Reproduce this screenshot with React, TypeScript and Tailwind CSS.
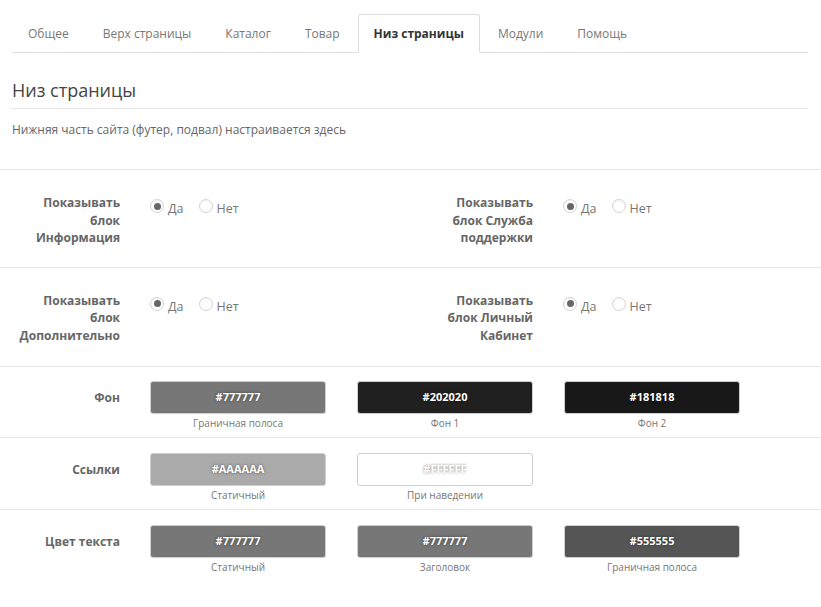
import React from "react";

const tabs = ["Общее", "Верх страницы", "Каталог", "Товар", "Низ страницы", "Модули", "Помощь"];

function Radio({ checked, label }: { checked?: boolean; label: string }) {
  return (
    <div className="flex items-start">
      <span className="flex h-[14px] w-[14px] items-center justify-center rounded-full border border-[#d4d4d4] bg-white shadow-[inset_0_1px_2px_rgba(0,0,0,0.06)]">
        {checked && <span className="h-[7px] w-[7px] rounded-full bg-[#666]" />}
      </span>
      <span className="ml-[4px] pt-[1px] text-[12.5px] leading-[18px] text-[#777]">{label}</span>
    </div>
  );
}

function RadioField({ label }: { label: string }) {
  return (
    <div className="flex w-[413px] shrink-0">
      <div className="ml-[14px] w-[106px] text-right text-[12px] font-bold leading-[17.5px] text-[#666]">{label}</div>
      <div className="ml-[30px] mt-[5px] flex gap-[15px]">
        <Radio checked label="Да" />
        <Radio label="Нет" />
      </div>
    </div>
  );
}

type Sw = { color: string; text: string; caption: string };

function Swatch({ s }: { s: Sw }) {
  return (
    <div className="flex w-[176px] flex-col items-center">
      <div
        className="flex h-[33px] w-full items-center justify-center rounded-[3px] border border-[#cfcfcf] text-[11px] font-bold text-white [text-shadow:0_0_3px_rgba(0,0,0,0.55)]"
        style={{ backgroundColor: s.color }}
      >
        {s.text}
      </div>
      <div className="mt-[2px] text-[10px] leading-[14px] text-[#777]">{s.caption}</div>
    </div>
  );
}

function SwatchRow({ label, items, pt }: { label: string; items: Sw[]; pt: string }) {
  return (
    <div className={`flex border-t border-[#e6e6e6] pb-[7px] ${pt}`}>
      <div className="ml-[14px] flex h-[33px] w-[106px] items-center justify-end text-[12px] font-bold text-[#666]">{label}</div>
      <div className="ml-[30px] flex gap-[31px]">
        {items.map((s, i) => (
          <Swatch key={i} s={s} />
        ))}
      </div>
    </div>
  );
}

export default function App() {
  return (
    <div className="h-[607px] w-[821px] overflow-hidden bg-white font-['Open_Sans',sans-serif]">
      <div className="pl-3 pr-[13px] pt-[14px]">
        <ul className="flex border-b border-[#dddddd]">
          {tabs.map((t) => {
            const active = t === "Низ страницы";
            return (
              <li
                key={t}
                className={
                  active
                    ? "-mb-px mr-[2px] rounded-t-[3px] border border-[#dddddd] border-b-white bg-white px-[15px] pb-[7px] pt-[9px] text-[12px] font-bold leading-5 text-[#333]"
                    : "mr-[2px] border border-transparent px-[15px] pb-[7px] pt-[9px] text-[12px] leading-5 text-[#777]"
                }
              >
                {t}
              </li>
            );
          })}
        </ul>
        <h1 className="mt-[24px] border-b border-[#e6e6e6] pb-[5px] text-[18px] leading-[26px] text-[#444]">Низ страницы</h1>
        <p className="mt-[12px] text-[12px] leading-[17px] text-[#666]">Нижняя часть сайта (футер, подвал) настраивается здесь</p>
      </div>
      <div className="mt-[31px]">
        <div className="flex border-t border-[#e6e6e6] pb-[20px] pt-[24px]">
          <RadioField label="Показывать блок Информация" />
          <RadioField label="Показывать блок Служба поддержки" />
        </div>
        <div className="flex border-t border-[#e6e6e6] pb-[22px] pt-[24px]">
          <RadioField label="Показывать блок Дополнительно" />
          <RadioField label="Показывать блок Личный Кабинет" />
        </div>
        <SwatchRow
          label="Фон"
          pt="pt-[14px]"
          items={[
            { color: "#777777", text: "#777777", caption: "Граничная полоса" },
            { color: "#202020", text: "#202020", caption: "Фон 1" },
            { color: "#181818", text: "#181818", caption: "Фон 2" },
          ]}
        />
        <SwatchRow
          label="Ссылки"
          pt="pt-[15px]"
          items={[
            { color: "#AAAAAA", text: "#AAAAAA", caption: "Статичный" },
            { color: "#FFFFFF", text: "#FFFFFF", caption: "При наведении" },
          ]}
        />
        <SwatchRow
          label="Цвет текста"
          pt="pt-[15px]"
          items={[
            { color: "#777777", text: "#777777", caption: "Статичный" },
            { color: "#777777", text: "#777777", caption: "Заголовок" },
            { color: "#555555", text: "#555555", caption: "Граничная полоса" },
          ]}
        />
      </div>
    </div>
  );
}
